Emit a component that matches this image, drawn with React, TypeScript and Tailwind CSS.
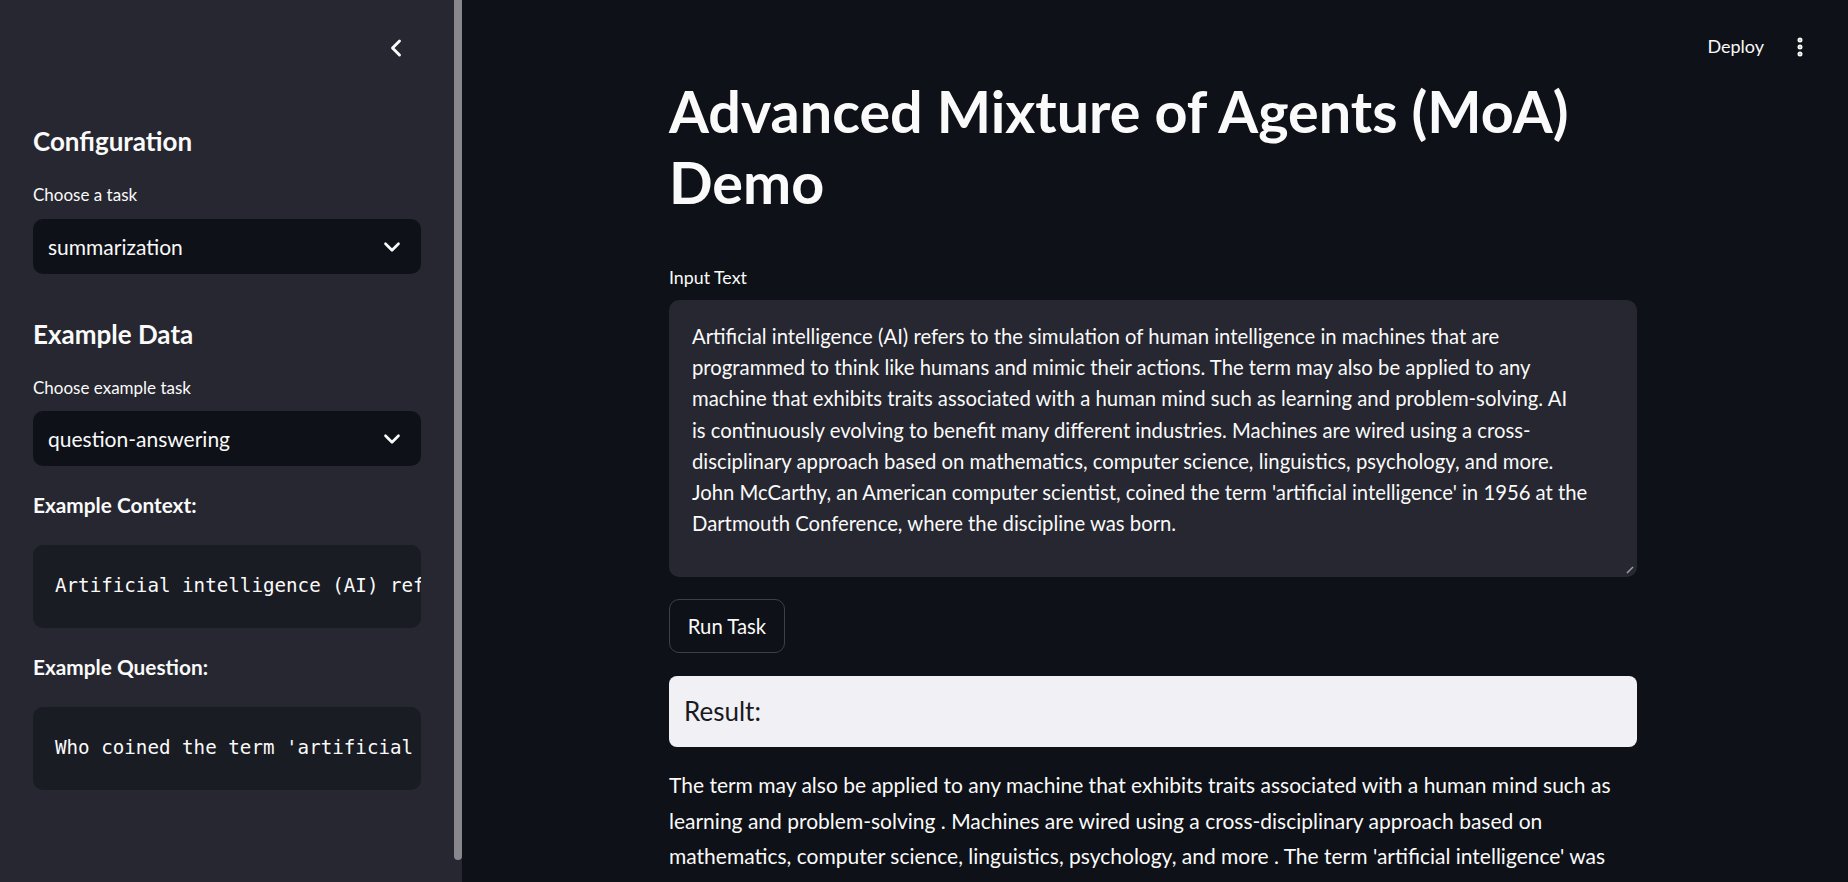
import { ChevronDown, ChevronLeft, EllipsisVertical } from 'lucide-react'

const sans = "font-['Source_Sans_Pro','Lato',sans-serif]"
const mono = "font-['DejaVu_Sans_Mono','Liberation_Mono',monospace]"

const inputLines = [
  'Artificial intelligence (AI) refers to the simulation of human intelligence in machines that are',
  'programmed to think like humans and mimic their actions. The term may also be applied to any',
  'machine that exhibits traits associated with a human mind such as learning and problem-solving. AI',
  'is continuously evolving to benefit many different industries. Machines are wired using a cross-',
  'disciplinary approach based on mathematics, computer science, linguistics, psychology, and more.',
  "John McCarthy, an American computer scientist, coined the term 'artificial intelligence' in 1956 at the",
  'Dartmouth Conference, where the discipline was born.',
]

const resultLines = [
  'The term may also be applied to any machine that exhibits traits associated with a human mind such as',
  'learning and problem-solving . Machines are wired using a cross-disciplinary approach based on',
  "mathematics, computer science, linguistics, psychology, and more . The term 'artificial intelligence' was",
]

const Select = ({ value, className }: { value: string; className: string }) => (
  <div
    className={`flex h-[55px] items-center justify-between rounded-[10px] bg-[#0e1117] pl-[15px] pr-[16px] ${className}`}
  >
    <span className="text-[21px] text-[#fafafa]">{value}</span>
    <ChevronDown size={26} strokeWidth={2.5} className="text-[#fafafa]" />
  </div>
)

const CodeBlock = ({ text, className }: { text: string; className: string }) => (
  <div
    className={`flex h-[83px] items-center overflow-hidden rounded-[10px] bg-[#1a1c24] pl-[22px] ${className}`}
  >
    <span className={`${mono} whitespace-pre text-[19.2px] text-[#fafafa]`}>{text}</span>
  </div>
)

export default function App() {
  return (
    <div className={`${sans} flex h-[882px] w-full overflow-hidden bg-[#0e1117] text-[#fafafa]`}>
      {/* sidebar */}
      <aside className="flex w-[462px] shrink-0 bg-[#262730]">
        <div className="flex w-[454px] flex-col px-[33px]">
          <div className="flex justify-end pr-[11px] pt-[34px]">
            <ChevronLeft size={28} strokeWidth={2.5} className="text-[#fafafa]" />
          </div>
          <h2 className="mt-[64px] text-[26px] font-bold leading-[30px]">Configuration</h2>
          <label className="mt-[28px] text-[17px] leading-[21px]">Choose a task</label>
          <Select value="summarization" className="mt-[14px]" />
          <h2 className="mt-[45px] text-[26px] font-bold leading-[30px]">Example Data</h2>
          <label className="mt-[28px] text-[17px] leading-[21px]">Choose example task</label>
          <Select value="question-answering" className="mt-[13px]" />
          <p className="mt-[27px] text-[20.8px] font-bold leading-[24px]">Example Context:</p>
          <CodeBlock
            className="mt-[28px]"
            text="Artificial intelligence (AI) refers to the simulation of human intelligence in machines"
          />
          <p className="mt-[27px] text-[20.8px] font-bold leading-[24px]">Example Question:</p>
          <CodeBlock className="mt-[28px]" text="Who coined the term 'artificial intelligence'?" />
        </div>
        <div className="w-[8px]">
          <div className="h-[860px] rounded-b-full bg-[#88878d]"></div>
        </div>
      </aside>

      {/* main */}
      <main className="relative flex-1">
        <div className="absolute right-[36px] top-[33px] flex items-center gap-[24px]">
          <span className="text-[18px]">Deploy</span>
          <EllipsisVertical size={24} strokeWidth={3} />
        </div>

        <div className="ml-[207px] flex w-[968px] flex-col pt-[75px]">
          <h1 className="whitespace-nowrap text-[57.5px] font-bold leading-[71px]">
            Advanced Mixture of Agents (MoA)
            <br />
            Demo
          </h1>

          <label className="mt-[50px] text-[17.8px] leading-[21px]">Input Text</label>
          <div className="relative mt-[12px] h-[277px] rounded-[10px] bg-[#262730] pl-[23px] pt-[21px]">
            {inputLines.map((line) => (
              <div key={line} className="whitespace-nowrap text-[20.3px] leading-[31.2px]">
                {line}
              </div>
            ))}
            <svg
              className="absolute bottom-[3px] right-[3px]"
              width="8"
              height="8"
              viewBox="0 0 8 8"
            >
              <path d="M1 7 L7 1" stroke="#a0a0a8" strokeWidth="1.5" />
            </svg>
          </div>

          <button className="mt-[22px] h-[54px] w-[116px] rounded-[10px] border border-[#3e4045] text-[20.3px]">
            Run Task
          </button>

          <div className="mt-[23px] flex h-[71px] items-center rounded-[8px] bg-[#f0f0f5] pl-[15px]">
            <span className="text-[26px] text-[#1a1a1f]">Result:</span>
          </div>

          <div className="mt-[20px]">
            {resultLines.map((line) => (
              <div key={line} className="whitespace-nowrap text-[21px] leading-[35.5px]">
                {line}
              </div>
            ))}
          </div>
        </div>
      </main>
    </div>
  )
}
